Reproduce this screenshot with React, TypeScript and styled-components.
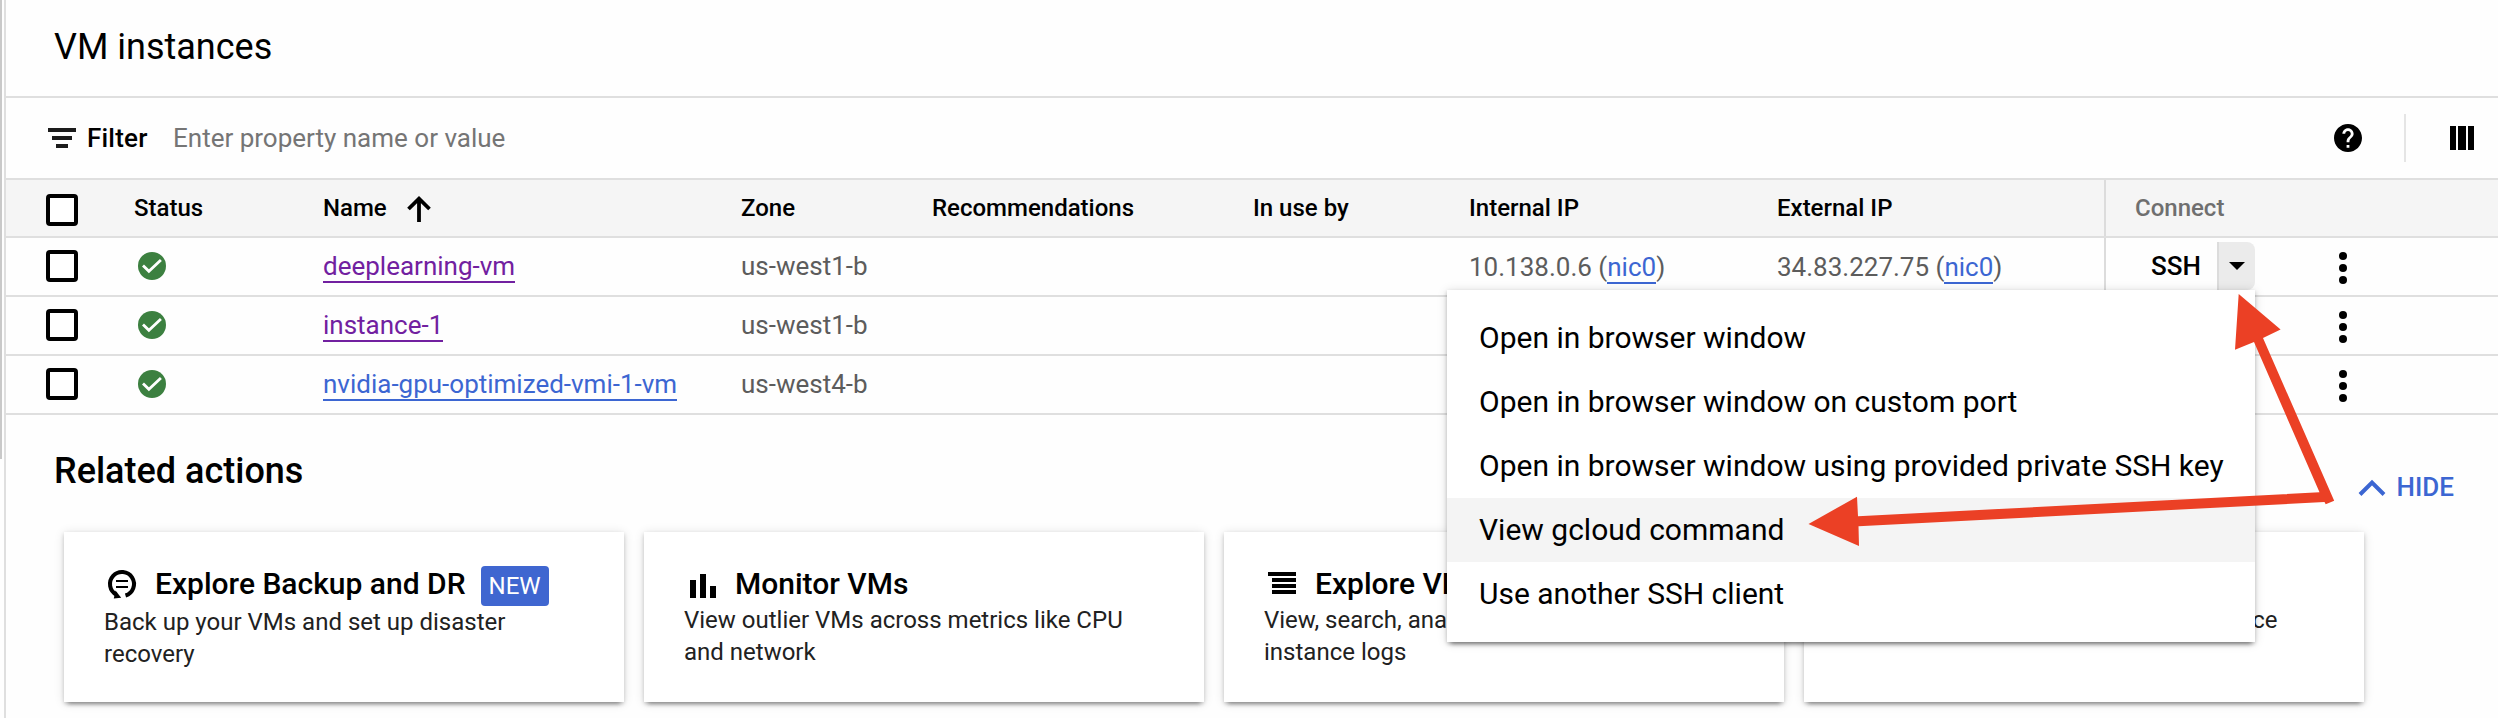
import React from "react";
import styled, { createGlobalStyle } from "styled-components";

const GlobalStyle = createGlobalStyle`
  * { box-sizing: border-box; }
  body { margin: 0; background: #fefefe; font-family: Roboto, "Liberation Sans", sans-serif; color: #000; }
`;

const Page = styled.div`
  position: relative;
  display: flex;
  width: 2498px;
  height: 718px;
  overflow: hidden;
`;

const Rail = styled.div`
  flex: 0 0 6px;
  border-right: 2px solid #dfdfdf;
`;

const RailThumb = styled.div`
  width: 2px;
  height: 459px;
  background: #c9c9c9;
`;

const Main = styled.main`
  flex: 1;
  min-width: 0;
`;

const TitleBar = styled.header`
  display: flex;
  height: 98px;
  padding: 26px 0 0 48px;
  border-bottom: 2px solid #dfdfdf;
`;

const Title = styled.h1`
  margin: 0;
  font-size: 36px;
  line-height: 42px;
  font-weight: 400;
`;

const FilterBar = styled.div`
  display: flex;
  align-items: center;
  height: 82px;
  padding: 0 24px 0 42px;
  border-bottom: 2px solid #dfdfdf;
  font-size: 26px;
  line-height: 30px;
`;

const FilterLabel = styled.span`
  margin-left: 11px;
  width: 86px;
  font-weight: 500;
  letter-spacing: 0.2px;
`;

const Placeholder = styled.span`
  flex: 1;
  color: #757575;
`;

const ToolbarDivider = styled.i`
  width: 2px;
  height: 48px;
  margin: 0 44px 0 42px;
  background: #e5e5e5;
`;

const columns = "128px 189px 418px 191px 321px 216px 308px 327px 1fr";

const Row = styled.div<{ $head?: boolean }>`
  display: grid;
  grid-template-columns: ${columns};
  height: ${(p) => (p.$head ? 58 : 59)}px;
  border-bottom: 2px solid #dfdfdf;
  background: ${(p) => (p.$head ? "#f5f5f5" : "transparent")};
  font-size: ${(p) => (p.$head ? 24 : 26)}px;
  font-weight: ${(p) => (p.$head ? 500 : 400)};
  line-height: ${(p) => (p.$head ? 30 : 30)}px;
  color: ${(p) => (p.$head ? "#000" : "#5c5c5c")};
`;

const Cell = styled.div<{ $top?: number }>`
  display: flex;
  align-items: flex-start;
  padding-top: ${(p) => p.$top ?? 13}px;
  white-space: pre;
`;

const ConnectCell = styled.div<{ $head?: boolean }>`
  display: flex;
  align-items: flex-start;
  border-left: 2px solid #dcdcdc;
  padding: ${(p) => (p.$head ? "13px 0 0 29px" : "4px 0 0 45px")};
  color: ${(p) => (p.$head ? "#6f6f6f" : "#000")};
`;

const Checkbox = styled.span`
  width: 32px;
  height: 32px;
  margin-left: 40px;
  border: 4px solid #000;
  border-radius: 4px;
  background: #fff;
`;

const Link = styled.a<{ $visited?: boolean }>`
  height: 32px;
  color: ${(p) => (p.$visited ? "#7120a0" : "#3c66d2")};
  border-bottom: 2px solid currentColor;
`;

const SshButton = styled.span`
  width: 66px;
  padding-top: 9px;
  font-weight: 500;
`;

const SshToggle = styled.span`
  display: flex;
  align-items: center;
  justify-content: center;
  width: 38px;
  height: 48px;
  border-left: 2px solid #dcdcdc;
  border-radius: 0 8px 8px 0;
  background: #ebebeb;
`;

const MoreIcon = styled.svg`
  margin: 10px 0 0 84px;
`;

const SortIcon = styled.svg`
  margin: 3px 0 0 20px;
`;

const StatusIcon = styled.svg`
  margin-left: 4px;
`;

const SectionHead = styled.div`
  display: flex;
  justify-content: space-between;
  height: 117px;
  padding: 35px 44px 0 48px;
`;

const SectionTitle = styled.h2`
  margin: 0;
  font-size: 36px;
  line-height: 42px;
  font-weight: 500;
`;

const HideButton = styled.span`
  display: flex;
  align-items: flex-start;
  gap: 11px;
  padding-top: 22px;
  font-size: 26px;
  line-height: 30px;
  font-weight: 500;
  color: #3c66d2;
`;

const ChevronUp = styled.svg`
  margin-top: 7px;
`;

const Cards = styled.div`
  display: flex;
  gap: 20px;
  padding-left: 58px;
`;

const Card = styled.article`
  width: 560px;
  height: 170px;
  padding: 34px 40px 0;
  background: #fff;
  box-shadow: 0 6px 4px -4px rgba(0, 0, 0, 0.3), 0 2px 4px rgba(0, 0, 0, 0.18), 0 1px 10px rgba(0, 0, 0, 0.12);
`;

const CardHead = styled.div<{ $tall?: boolean }>`
  display: flex;
  align-items: flex-start;
  height: ${(p) => (p.$tall ? 40 : 38)}px;
  font-size: 30px;
  line-height: 36px;
  font-weight: 500;
  white-space: nowrap;
`;

const CardIcon = styled.svg`
  flex: 0 0 36px;
  margin-right: 15px;
`;

const Badge = styled.span`
  margin-left: 15px;
  padding: 2px 8px 0;
  height: 40px;
  border-radius: 4px;
  background: #3f66d0;
  color: #fff;
  font-size: 24px;
  font-weight: 400;
`;

const CardText = styled.p`
  margin: 0;
  font-size: 24px;
  line-height: 32px;
  color: #212121;
`;

const Menu = styled.div`
  position: absolute;
  left: 1447px;
  top: 290px;
  width: 808px;
  padding: 16px 0;
  background: #fff;
  box-shadow: 0 6px 4px -4px rgba(0, 0, 0, 0.35), 0 2px 4px rgba(0, 0, 0, 0.22), 0 1px 10px rgba(0, 0, 0, 0.14);
`;

const MenuItem = styled.div<{ $active?: boolean }>`
  height: 64px;
  padding-left: 32px;
  font-size: 30px;
  line-height: 64px;
  white-space: nowrap;
  background: ${(p) => (p.$active ? "#f4f4f4" : "transparent")};
`;

const Annotation = styled.svg`
  position: absolute;
  left: 1800px;
  top: 284px;
`;

const StatusOk = () => (
  <StatusIcon width="28" height="28" viewBox="0 0 28 28">
    <circle cx="14" cy="14" r="14" fill="#3c8040" />
    <path d="M5 13.400 10.900 19.200 22.900 8" fill="none" stroke="#fff" strokeWidth="2.800" />
  </StatusIcon>
);

const More = () => (
  <MoreIcon width="8" height="32" viewBox="0 0 8 32">
    <circle cx="4" cy="4" r="4" />
    <circle cx="4" cy="16" r="4" />
    <circle cx="4" cy="28" r="4" />
  </MoreIcon>
);

type Vm = { name: string; zone: string; visited?: boolean; internal?: string; external?: string };

const vms: Vm[] = [
  { name: "deeplearning-vm", zone: "us-west1-b", visited: true, internal: "10.138.0.6", external: "34.83.227.75" },
  { name: "instance-1", zone: "us-west1-b", visited: true },
  { name: "nvidia-gpu-optimized-vmi-1-vm", zone: "us-west4-b" },
];

const Ip = ({ value }: { value?: string }) => (
  <Cell $top={14}>{value && <>{value} (<Link>nic0</Link>)</>}</Cell>
);

const actions = [
  {
    title: "Explore Backup and DR",
    badge: "NEW",
    lines: ["Back up your VMs and set up disaster", "recovery"],
    icon: (
      <>
        <g fill="none" stroke="#000">
          <path d="M12.500 28.700A12 12 0 1 1 21.500 29.500" strokeWidth="4" />
          <path d="M12 15h12M12 21h12" strokeWidth="2" />
        </g>
        <path d="M11.500 24.500 17.200 31.800 9.800 32.500z" />
      </>
    ),
  },
  {
    title: "Monitor VMs",
    lines: ["View outlier VMs across metrics like CPU", "and network"],
    icon: <path d="M6 14h6v18H6zM16 8h6v24h-6zM26 20h6v12h-6z" />,
  },
  {
    title: "Explore VM logs",
    lines: ["View, search, analyze, and download VM", "instance logs"],
    icon: <path d="M4 6h28v4H4zM8 12h24v4H8zM8 18h24v4H8zM8 24h24v4H8z" />,
  },
  {
    title: "Set up firewall rules",
    lines: ["Control traffic to and from a VM instance"],
    icon: <path d="M4 6h28v4H4zM4 14h28v4H4zM4 22h28v4H4z" />,
  },
];

const menuItems = [
  "Open in browser window",
  "Open in browser window on custom port",
  "Open in browser window using provided private SSH key",
  "View gcloud command",
  "Use another SSH client",
];

export default function App() {
  return (
    <Page>
      <GlobalStyle />
      <Rail>
        <RailThumb />
      </Rail>
      <Main>
        <TitleBar>
          <Title>VM instances</Title>
        </TitleBar>
        <FilterBar>
          <svg width="28" height="20" viewBox="0 0 28 20" fill="#1c1c1c">
            <path d="M0 0h28v4H0zM4 8h20v4H4zM8 16h12v4H8z" />
          </svg>
          <FilterLabel>Filter</FilterLabel>
          <Placeholder>Enter property name or value</Placeholder>
          <svg width="28" height="28" viewBox="2 2 20 20">
            <path d="M12 2C6.48 2 2 6.48 2 12s4.480 10 10 10 10-4.480 10-10S17.520 2 12 2zm1 17h-2v-2h2v2zm2.070-7.750l-.9.920C13.450 12.900 13 13.500 13 15h-2v-.5c0-1.100.450-2.100 1.170-2.830l1.240-1.260c.370-.36.590-.86.590-1.410 0-1.100-.9-2-2-2s-2 .9-2 2H8c0-2.210 1.790-4 4-4s4 1.790 4 4c0 .88-.36 1.680-.93 2.250z" />
          </svg>
          <ToolbarDivider />
          <svg width="24" height="24" viewBox="0 0 24 24">
            <path d="M0 0h6v24H0zM8 0h8v24H8zM18 0h6v24h-6z" />
          </svg>
        </FilterBar>
        <Row $head>
          <Cell $top={14}><Checkbox /></Cell>
          <Cell>Status</Cell>
          <Cell>
            Name
            <SortIcon width="24" height="26" viewBox="0 0 24 26">
              <path d="M12 26V3M1.500 13 12 2.700 22.500 13" fill="none" stroke="#000" strokeWidth="3.800" />
            </SortIcon>
          </Cell>
          <Cell>Zone</Cell>
          <Cell>Recommendations</Cell>
          <Cell>In use by</Cell>
          <Cell>Internal IP</Cell>
          <Cell>External IP</Cell>
          <ConnectCell $head>Connect</ConnectCell>
        </Row>
        {vms.map((vm) => (
          <Row key={vm.name}>
            <Cell $top={12}><Checkbox /></Cell>
            <Cell $top={14}><StatusOk /></Cell>
            <Cell><Link $visited={vm.visited}>{vm.name}</Link></Cell>
            <Cell>{vm.zone}</Cell>
            <Cell />
            <Cell />
            <Ip value={vm.internal} />
            <Ip value={vm.external} />
            <ConnectCell>
              <SshButton>SSH</SshButton>
              <SshToggle>
                <svg width="16" height="8" viewBox="0 0 16 8"><path d="M0 0h16L8 8z" /></svg>
              </SshToggle>
              <More />
            </ConnectCell>
          </Row>
        ))}
        <SectionHead>
          <SectionTitle>Related actions</SectionTitle>
          <HideButton>
            <ChevronUp width="28" height="18" viewBox="0 0 28 18">
              <path d="M2 15.500 14 3.500 26 15.500" fill="none" stroke="currentColor" strokeWidth="4" />
            </ChevronUp>
            HIDE
          </HideButton>
        </SectionHead>
        <Cards>
          {actions.map((a) => (
            <Card key={a.title}>
              <CardHead $tall={!!a.badge}>
                <CardIcon width="36" height="36" viewBox="0 0 36 36">{a.icon}</CardIcon>
                {a.title}
                {a.badge && <Badge>{a.badge}</Badge>}
              </CardHead>
              <CardText>
                {a.lines.map((l) => (
                  <React.Fragment key={l}>{l}<br /></React.Fragment>
                ))}
              </CardText>
            </Card>
          ))}
        </Cards>
      </Main>
      <Menu>
        {menuItems.map((m) => (
          <MenuItem key={m} $active={m === "View gcloud command"}>{m}</MenuItem>
        ))}
      </Menu>
      <Annotation width="560" height="280" viewBox="1800 284 560 280" fill="#eb4025">
        <path d="M2238.700 294 2280.600 329.500 2263 338 2334.200 500.700 2325.700 504.200 2324.500 502 1858.500 526.300 1859 546 1808.500 524 1857 496.700 1858 516.300 2319.500 492.300 2254 342 2235 349.700z" />
      </Annotation>
    </Page>
  );
}
